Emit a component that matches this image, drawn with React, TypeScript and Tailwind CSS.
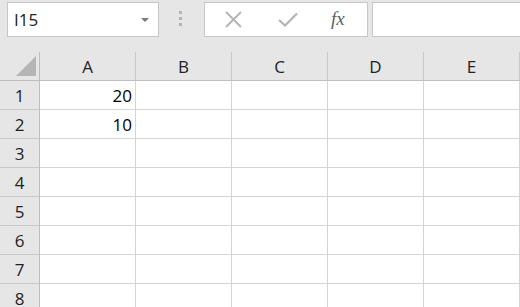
import React from "react";

const cols = ["A", "B", "C", "D", "E"];
const rows = [1, 2, 3, 4, 5, 6, 7, 8];
const values: Record<string, string> = { A1: "20", A2: "10" };

const font = { fontFamily: '"Open Sans", "Noto Sans", sans-serif' };

function FormulaBar() {
  return (
    <div className="flex h-[52px] items-start bg-[#e6e6e6] pt-[2px]">
      {/* name box */}
      <div className="ml-[7px] flex h-[35px] w-[152px] items-center justify-between border border-[#c6c6c6] bg-white pl-[6px] pr-[9px]">
        <span className="text-[17px] text-[#222]">I15</span>
        <svg width="8" height="4" viewBox="0 0 8 4">
          <polygon points="0,0 8,0 4,4" fill="#7a7a7a" />
        </svg>
      </div>
      {/* grip */}
      <div className="ml-[20px] mt-[9px] flex w-[4px] flex-col gap-[3px]">
        <span className="h-[3px] w-[3px] bg-[#b4b4b4]" />
        <span className="h-[3px] w-[3px] bg-[#b4b4b4]" />
        <span className="h-[3px] w-[3px] bg-[#b4b4b4]" />
      </div>
      {/* cancel / enter / fx */}
      <div className="ml-[21px] flex h-[35px] w-[164px] items-center border border-[#c6c6c6] bg-white">
        <svg className="ml-[20px]" width="17" height="17" viewBox="0 0 17 17">
          <path d="M1 1 L16 16 M16 1 L1 16" stroke="#b3b3b3" strokeWidth="1.8" />
        </svg>
        <svg className="ml-[36px]" width="20" height="15" viewBox="0 0 20 15">
          <path d="M1 8 L7 13.5 L19 1.5" stroke="#b3b3b3" strokeWidth="2.2" fill="none" />
        </svg>
        <span
          className="ml-[33px] text-[19px] italic text-[#5f5f5f]"
          style={{ fontFamily: '"Liberation Serif", serif' }}
        >
          fx
        </span>
      </div>
      <div className="ml-[4px] h-[35px] flex-1 border border-r-0 border-[#c6c6c6] bg-white" />
    </div>
  );
}

export default function App() {
  return (
    <div className="h-[307px] w-[520px] overflow-hidden bg-white" style={font}>
      <FormulaBar />
      <div className="grid grid-cols-[40px_repeat(5,96px)]">
        <div className="relative h-[29px] border-b border-r border-[#bdbdbd] bg-[#e6e6e6]">
          <svg className="absolute left-[15px] top-[3px]" width="22" height="22" viewBox="0 0 22 22">
            <polygon points="1,21 21,21 21,1" fill="#b5b5b5" />
          </svg>
        </div>
        {cols.map((c) => (
          <div
            key={c}
            className="flex h-[29px] items-center justify-center border-b border-r border-b-[#bdbdbd] border-r-[#c9c9c9] bg-[#e6e6e6] pt-[2px] text-[17px] text-[#222]"
          >
            {c}
          </div>
        ))}
        {rows.map((r) => (
          <React.Fragment key={r}>
            <div className="flex h-[29px] items-center justify-center border-b border-r border-b-[#c9c9c9] border-r-[#bdbdbd] bg-[#e6e6e6] pt-[2px] text-[17px] text-[#222]">
              {r}
            </div>
            {cols.map((c) => (
              <div
                key={c}
                className="flex h-[29px] items-center justify-end border-b border-r border-[#d4d4d4] pr-[3px] pt-[2px] text-[17px] text-black"
              >
                {values[c + r] ?? ""}
              </div>
            ))}
          </React.Fragment>
        ))}
      </div>
    </div>
  );
}
